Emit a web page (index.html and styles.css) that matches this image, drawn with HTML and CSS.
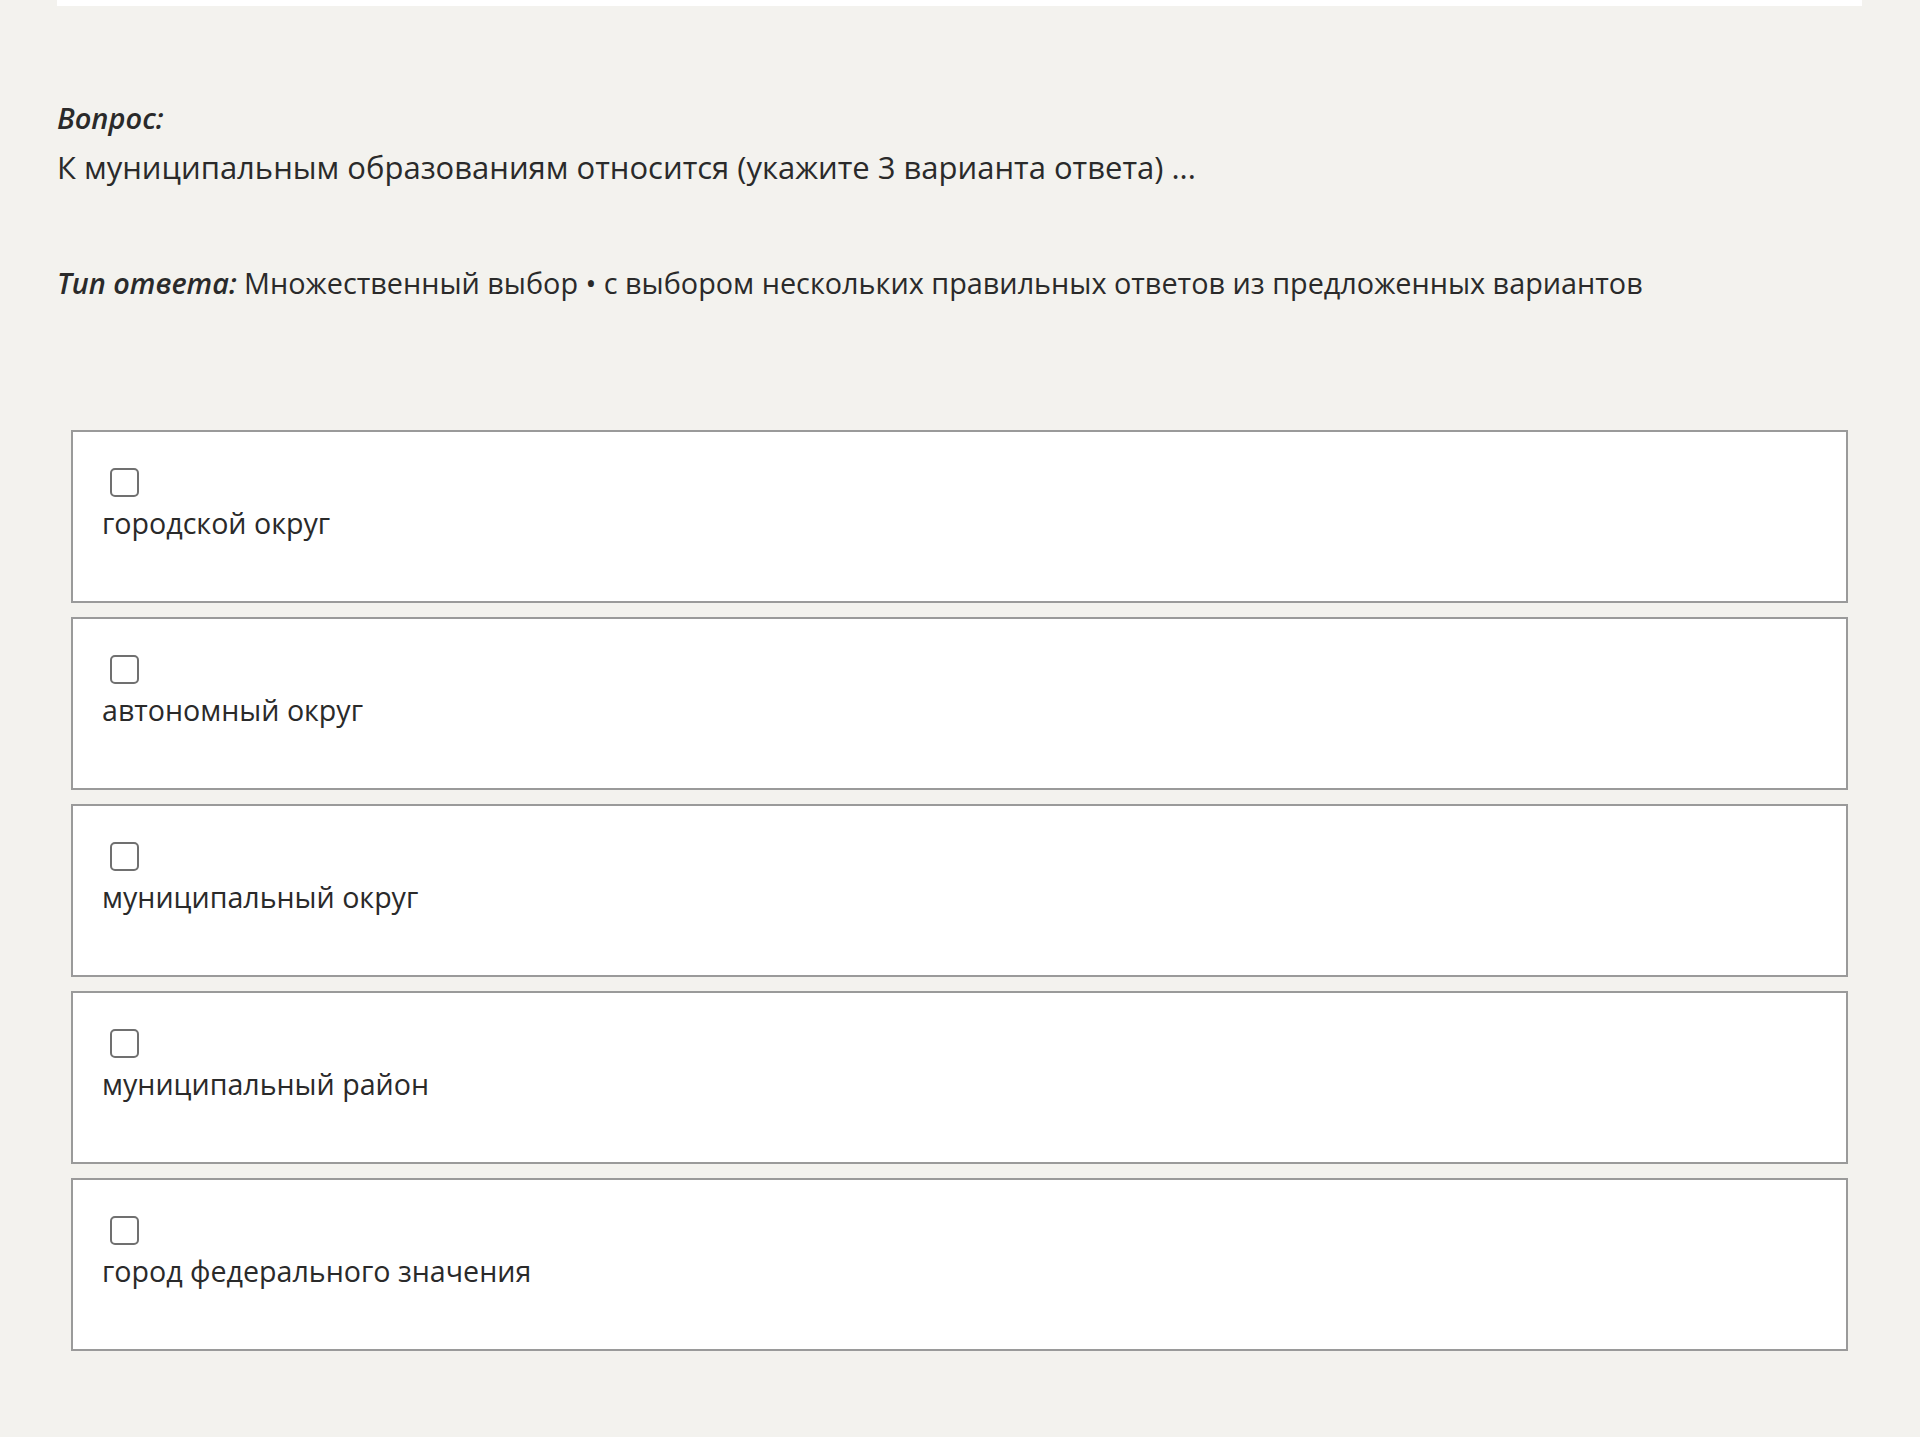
FILE: index.html
```html
<!DOCTYPE html>
<html lang="ru">
<head>
    <meta charset="UTF-8">
    <meta name="viewport" content="width=device-width, initial-scale=1.0">
    <title>Вопрос</title>
    <link rel="stylesheet" href="styles.css">
</head>
<body>
    <div class="page">
        <div class="top_card"></div>

        <!-- текст вопроса -->
        <div class="question">
            <div class="label">Вопрос:</div>
            <div class="text">К муниципальным образованиям относится (укажите 3 варианта ответа) ...</div>
        </div>

        <div class="answer_type">
            <span class="label">Тип ответа:</span> Множественный выбор • с выбором нескольких правильных ответов из предложенных вариантов
        </div>

        <!-- варианты ответа -->
        <ul class="options">
            <li class="option">
                <input class="check" type="checkbox">
                <div class="option_text">городской округ</div>
            </li>
            <li class="option">
                <input class="check" type="checkbox">
                <div class="option_text">автономный округ</div>
            </li>
            <li class="option">
                <input class="check" type="checkbox">
                <div class="option_text">муниципальный округ</div>
            </li>
            <li class="option">
                <input class="check" type="checkbox">
                <div class="option_text">муниципальный район</div>
            </li>
            <li class="option">
                <input class="check" type="checkbox">
                <div class="option_text">город федерального значения</div>
            </li>
        </ul>
    </div>
</body>
</html>
```

FILE: styles.css
```css
*{
    margin:0;
    padding:0;
    box-sizing: border-box;
}
html,body{
    width:100%;
    min-height:100vh;
}
body{
    background: #f3f2ee;
    font-family: "Open Sans", "Noto Sans", sans-serif;
    color: #2a2a2a;
}

.page{
    padding: 0 58px 0 57px;
}
.top_card{
    height:6px;
    background: #fff;
}

.question{
    margin-top: 92px;
}
.label{
    font-style: italic;
    font-weight: 600;
}
.question .label{
    font-size: 29px;
    line-height: 40px;
}
.question .text{
    margin-top: 6px;
    font-size: 31px;
    line-height: 46px;
}

.answer_type{
    margin-top: 73px;
    font-size: 28.8px;
    line-height: 40px;
}

.options{
    list-style: none;
    margin: 127px 14px 0;
    display: flex;
    flex-flow: column nowrap;
    gap: 14px;
}
.option{
    background: #fff;
    border: 2px solid #9a9a9a;
    padding: 36px 29px 58px;
    display: flex;
    flex-flow: column nowrap;
    align-items: flex-start;
}
.check{
    appearance: none;
    width:29px;
    height:29px;
    margin-left: 8px;
    margin-bottom: 6px;
    border: 2px solid #707070;
    border-radius: 5px;
    background: #fff;
}
.option_text{
    font-size: 28.6px;
    line-height: 40px;
}
```
